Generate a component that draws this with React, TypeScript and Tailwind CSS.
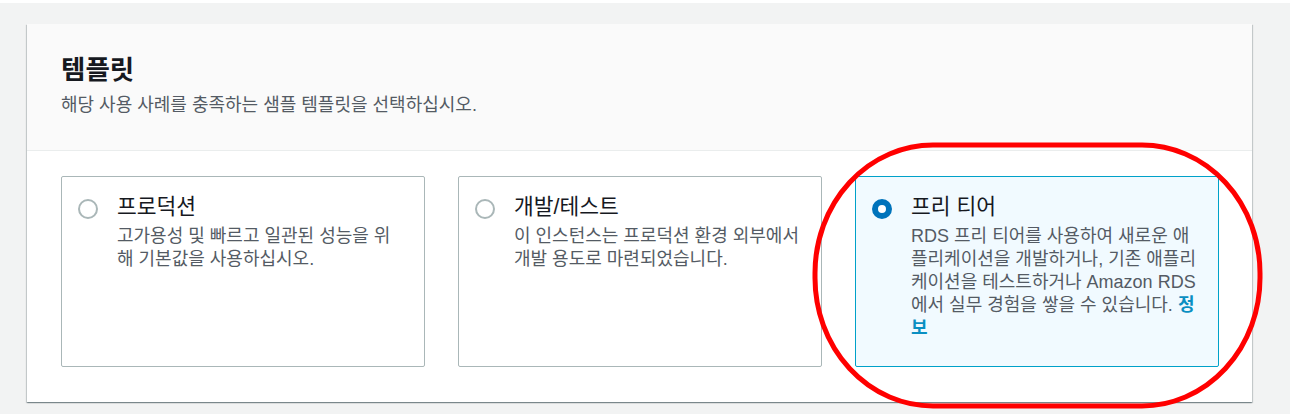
import * as React from "react";

const FONT = { fontFamily: '"Liberation Sans", "Noto Sans CJK KR", sans-serif' };

function Radio({ checked }: { checked?: boolean }) {
    if (checked) {
        return <span className="block size-5 shrink-0 rounded-full border-[6px] border-[#0073bb] bg-white" />;
    }
    return <span className="block size-5 shrink-0 rounded-full border-2 border-[#aab7b8] bg-white" />;
}

function TemplateCard({ title, checked, children }: any) {
    return (
        <div
            className={
                checked
                    ? "h-[191px] rounded-[2px] border border-[#00a1c9] bg-[#f1faff] pl-4 pr-3 pt-[18px]"
                    : "h-[191px] rounded-[2px] border border-[#aab7b8] bg-white pl-4 pr-3 pt-[18px]"
            }
        >
            <div className="flex gap-[19px]">
                <div className="pt-[4px]">
                    <Radio checked={checked} />
                </div>
                <div>
                    <div className="text-[21.5px] leading-[24px] text-[#16191f]">{title}</div>
                    <div className="mt-[6px] text-[18px] leading-[23px] text-[#545b64]">{children}</div>
                </div>
            </div>
        </div>
    );
}

export default function App() {
    return (
        <div className="relative h-[414px] w-[1290px] overflow-hidden bg-[#f2f3f3]" style={FONT}>
            <div className="h-[3px] bg-white" />
            <div className="ml-[27px] mt-[21px] w-[1225px] bg-white shadow-[0_1px_1px_0_rgba(0,28,36,0.3),1px_1px_1px_0_rgba(0,28,36,0.15),-1px_1px_1px_0_rgba(0,28,36,0.15)]">
                <div className="h-[127px] border-b border-[#eaeded] bg-[#fafafa] px-[34px] pt-[30px]">
                    <h2 className="text-[26.5px] font-bold leading-[32px] text-[#16191f]">템플릿</h2>
                    <p className="mt-[8px] text-[18px] leading-[22px] text-[#545b64]">
                        해당 사용 사례를 충족하는 샘플 템플릿을 선택하십시오.
                    </p>
                </div>
                <div className="grid grid-cols-[364px_364px_364px] gap-[33px] pb-[35px] pl-[34px] pt-[25px]">
                    <TemplateCard title="프로덕션">
                        고가용성 및 빠르고 일관된 성능을 위<br />
                        해 기본값을 사용하십시오.
                    </TemplateCard>
                    <TemplateCard title="개발/테스트">
                        이 인스턴스는 프로덕션 환경 외부에서<br />
                        개발 용도로 마련되었습니다.
                    </TemplateCard>
                    <TemplateCard title="프리 티어" checked>
                        RDS 프리 티어를 사용하여 새로운 애<br />
                        플리케이션을 개발하거나, 기존 애플리<br />
                        케이션을 테스트하거나 Amazon RDS<br />
                        에서 실무 경험을 쌓을 수 있습니다.{" "}
                        <a className="font-bold text-[#0a8fc2]">
                            정<br />보
                        </a>
                    </TemplateCard>
                </div>
            </div>

            {/* red annotation */}
            <svg className="pointer-events-none absolute left-0 top-0" width="1290" height="414">
                <rect x="815" y="145" width="445" height="261" rx="118" ry="128" fill="none" stroke="#ff0000" strokeWidth="5" />
            </svg>
        </div>
    );
}
